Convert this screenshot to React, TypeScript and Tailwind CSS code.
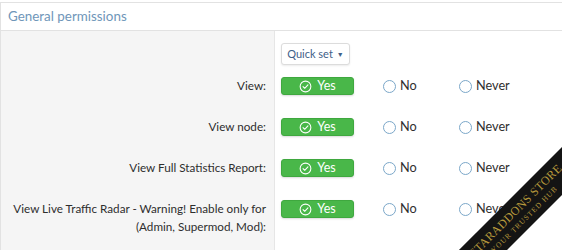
import React from "react";

const rows = [
  { label: ["View:"] },
  { label: ["View node:"] },
  { label: ["View Full Statistics Report:"] },
  { label: ["View Live Traffic Radar - Warning! Enable only for", "(Admin, Supermod, Mod):"] },
];

function CheckCircle() {
  return (
    <svg width="13" height="13" viewBox="0 0 16 16" fill="none" stroke="white" strokeWidth="1.3">
      <circle cx="8" cy="8" r="6.6" />
      <path d="M5 8.2l2 2 4-4.2" strokeLinecap="round" strokeLinejoin="round" />
    </svg>
  );
}

function Radio({ text, width }: { text: string; width: string }) {
  return (
    <label className={`flex items-center gap-[4px] ${width}`}>
      <span className="h-[13px] w-[13px] rounded-full border border-[#7ba7c9] bg-white" />
      <span className="text-[12.7px] text-[#2f2f2f]">{text}</span>
    </label>
  );
}

export default function App() {
  return (
    <div
      className="relative h-[250px] w-[562px] overflow-hidden bg-white pt-[2px]"
      style={{ fontFamily: 'Lato, "Open Sans", sans-serif' }}
    >
      <div className="h-full border-l border-t border-[#e2e2e2]">
        {/* Header */}
        <div className="flex h-[28px] items-center border-b border-[#e2e2e2] px-[7px]">
          <h3 className="text-[13.4px] text-[#6f96b9]">General permissions</h3>
        </div>

        <div className="flex h-full">
          {/* Labels */}
          <div className="w-[274px] border-r border-[#e6e6e6] bg-[#f5f5f5] pr-[8px] pt-[45px] text-right text-[11.7px] text-[#2e2e2e]">
            {rows.map((r, i) => (
              <div key={i} className="mb-[23px] whitespace-nowrap">
                {r.label.map((l) => (
                  <div key={l} className="leading-[18px]">{l}</div>
                ))}
              </div>
            ))}
          </div>

          {/* Controls */}
          <div className="flex-1 pl-[6px] pt-[12px]">
            <button className="flex h-[22px] w-[69px] items-center justify-center gap-[4px] rounded-[3px] border border-[#dcdcdc] bg-white text-[11px] text-[#3f6188] shadow-[0_1px_2px_rgba(0,0,0,0.08)]">
              Quick set
              <span className="text-[7px]">▼</span>
            </button>
            <div className="mt-[12px]">
              {rows.map((_, i) => (
                <div key={i} className="mb-[23px] flex h-[18px] items-center">
                  <div className="mr-[29px] flex h-[18px] w-[73px] items-center justify-center gap-[5px] rounded-[3px] border border-[#3fa83f] bg-[#49b749] text-[12.5px] text-white shadow-[0_1px_2px_rgba(0,0,0,0.15)]">
                    <CheckCircle />
                    <span>Yes</span>
                  </div>
                  <Radio text="No" width="w-[76px]" />
                  <Radio text="Never" width="w-[80px]" />
                </div>
              ))}
            </div>
          </div>
        </div>
      </div>

      {/* Watermark ribbon */}
      <div
        className="absolute left-[389px] top-[197px] flex h-[34px] w-[260px] -rotate-45 flex-col items-center justify-center bg-[#141414] leading-none text-[#b89a3c]"
        style={{ fontFamily: '"Liberation Serif", serif' }}
      >
        <span className="text-[12px] tracking-[0.3px]">STARADDONS STORE</span>
        <span className="mt-[3px] text-[7.5px] tracking-[1px]">YOUR TRUSTED HUB</span>
      </div>
    </div>
  );
}
